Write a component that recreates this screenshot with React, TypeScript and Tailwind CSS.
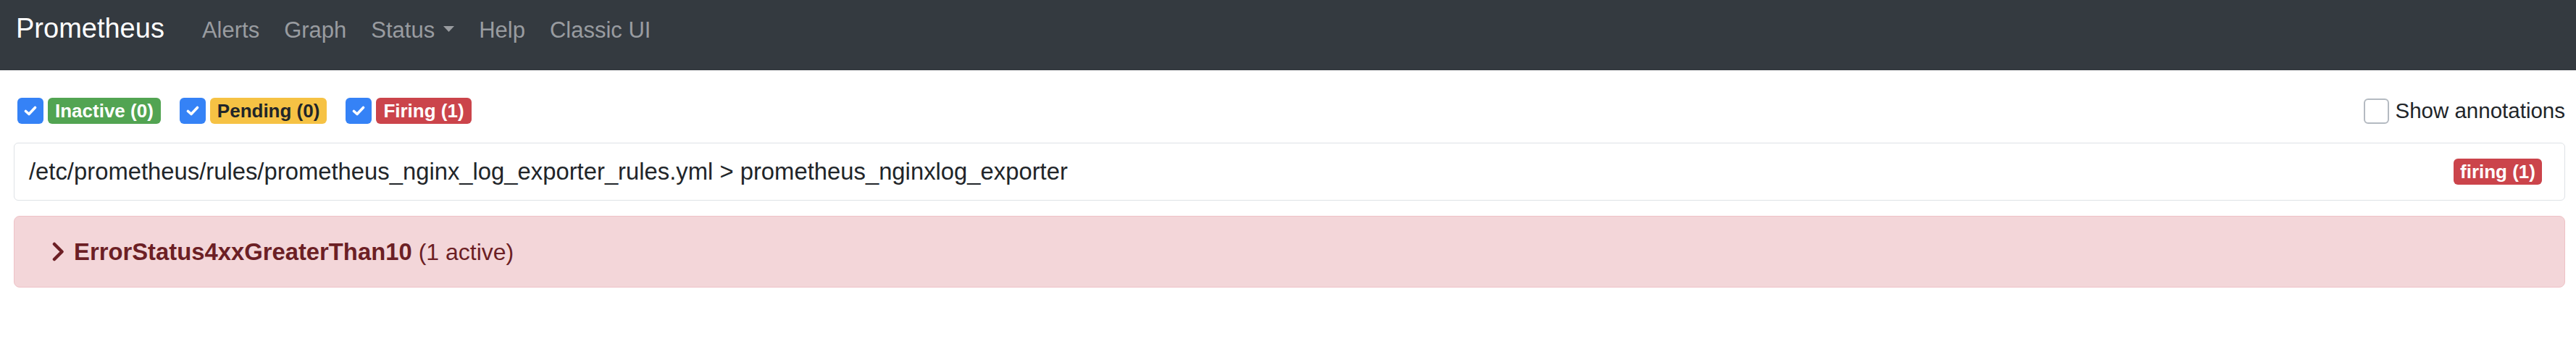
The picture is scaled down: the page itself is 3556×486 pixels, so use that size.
import React from "react";

const font = { fontFamily: '"Liberation Sans", Arial, sans-serif' };

function Check({ checked }: { checked: boolean }) {
  if (!checked) {
    return (
      <span className="w-[35px] h-[35px] rounded-[6px] border-2 border-[#b4bac1] bg-white shrink-0" />
    );
  }
  return (
    <span className="w-[36px] h-[36px] rounded-[6px] bg-[#3582f6] flex items-center justify-center shrink-0">
      <svg width="18" height="14" viewBox="0 0 18 14">
        <polyline
          points="2.5,7.5 7,11.5 15.5,2.5"
          fill="none"
          stroke="white"
          strokeWidth="3.6"
          strokeLinecap="round"
          strokeLinejoin="round"
        />
      </svg>
    </span>
  );
}

function Badge({ label, className }: { label: string; className: string }) {
  return (
    <span
      className={
        "h-[36px] px-[10px] rounded-[6px] flex items-center text-[26px] font-bold leading-none " +
        className
      }
    >
      {label}
    </span>
  );
}

function App() {
  const links = ["Alerts", "Graph", "Status", "Help", "Classic UI"];
  return (
    <div className="min-h-[486px] bg-white text-[#212529]" style={font}>
      <nav className="h-[97px] bg-[#343a40] flex items-baseline pt-[20px] pl-[22px]">
        <span className="text-[38px] leading-none text-white mr-[52px]">Prometheus</span>
        <div className="flex items-baseline gap-[34px] text-[31px] leading-none text-[#999ca0]">
          {links.map((l) => (
            <span key={l} className="flex items-center">
              {l}
              {l === "Status" && (
                <svg width="15" height="9" viewBox="0 0 15 9" className="ml-[12px] mt-[-3px]">
                  <polygon points="0,0 15,0 7.5,8" fill="#999ca0" />
                </svg>
              )}
            </span>
          ))}
        </div>
      </nav>

      <div className="pl-[19px] pr-[15px] pt-[37px]">
        <div className="h-[38px] flex items-center justify-between pl-[5px]">
          <div className="flex items-center gap-[26px]">
            <div className="flex items-center gap-[6px]">
              <Check checked />
              <Badge label="Inactive (0)" className="bg-[#52a452] text-white" />
            </div>
            <div className="flex items-center gap-[6px]">
              <Check checked />
              <Badge label="Pending (0)" className="bg-[#f6c244] text-[#212529]" />
            </div>
            <div className="flex items-center gap-[6px]">
              <Check checked />
              <Badge label="Firing (1)" className="bg-[#cb444b] text-white" />
            </div>
          </div>
          <label className="flex items-center gap-[8px] text-[29.5px]">
            <Check checked={false} />
            Show annotations
          </label>
        </div>

        <div className="mt-[25px] h-[80px] border border-[#dee2e6] rounded-[6px] flex items-center justify-between pl-[20px] pr-[31px]">
          <span className="text-[32.8px]">
            /etc/prometheus/rules/prometheus_nginx_log_exporter_rules.yml &gt; prometheus_nginxlog_exporter
          </span>
          <span className="h-[36px] px-[9px] rounded-[6px] bg-[#cb444b] text-white text-[26px] font-bold flex items-center leading-none">
            firing (1)
          </span>
        </div>

        <div className="mt-[21px] h-[99px] bg-[#f3d6d9] border border-[#efc2c6] rounded-[8px] flex items-center pl-[52px] text-[#6c1f25]">
          <svg width="17" height="27" viewBox="0 0 17 27" className="mr-[13px]">
            <polyline
              points="3,3 13.5,13.5 3,24"
              fill="none"
              stroke="#6c1f25"
              strokeWidth="4.5"
              strokeLinecap="round"
              strokeLinejoin="round"
            />
          </svg>
          <span className="text-[32.8px] font-bold">ErrorStatus4xxGreaterThan10</span>
          <span className="text-[32px] ml-[9px]">(1 active)</span>
        </div>
      </div>
    </div>
  );
}

export default App;
